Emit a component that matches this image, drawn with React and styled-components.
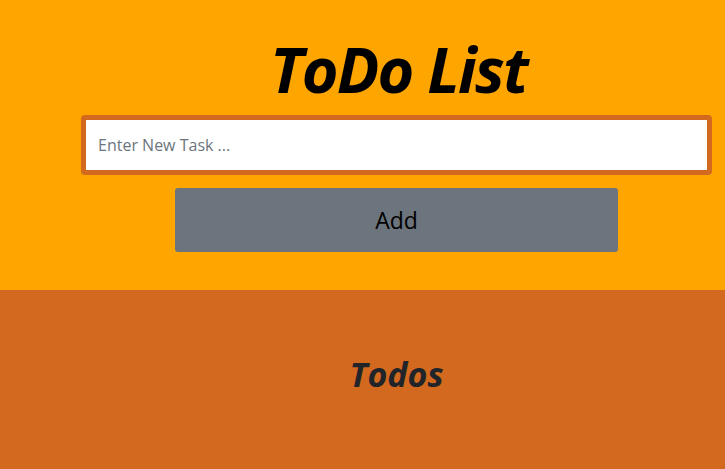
import React, { useState } from "react";
import styled, { createGlobalStyle } from "styled-components";

const GlobalStyle = createGlobalStyle`
  html, body {
    margin: 0;
    padding: 0;
    background: #d2691e;
    font-family: "Open Sans", "Noto Sans", sans-serif;
  }
  * {
    box-sizing: border-box;
  }
`;

const Header = styled.section`
  background: #ffa500;
  height: 290px;
  padding: 31px 13px 0 81px;
  display: flex;
  flex-direction: column;
  align-items: center;
`;

const Title = styled.h1`
  margin: 0;
  font-size: 63px;
  line-height: 1.2;
  font-style: italic;
  font-weight: 700;
  color: #000;
  letter-spacing: -1.8px;
  padding-left: 4px;
`;

const TaskInput = styled.input`
  margin-top: 8px;
  width: 100%;
  height: 60px;
  border: 5px solid #d2691e;
  border-radius: 4px;
  padding: 0 12px;
  font-family: inherit;
  font-size: 16px;
  color: #212529;
  outline: none;
  &::placeholder {
    color: #6c757d;
  }
`;

const AddButton = styled.button`
  margin-top: 13px;
  width: 443px;
  height: 64px;
  border: none;
  border-radius: 3px;
  background: #6c757d;
  color: #000;
  font-family: inherit;
  font-size: 23px;
  cursor: pointer;
`;

const TodosSection = styled.section`
  background: #d2691e;
  min-height: 179px;
  padding: 64px 13px 0 81px;
  display: flex;
  flex-direction: column;
  align-items: center;
`;

const SubTitle = styled.h2`
  margin: 0;
  font-size: 34px;
  line-height: 1.2;
  font-style: italic;
  font-weight: 700;
  color: #212529;
`;

const TodoItem = styled.div`
  font-size: 18px;
  color: #212529;
  padding: 6px 0;
`;

const App = () => {
  const [task, setTask] = useState("");
  const [todos, setTodos] = useState([]);

  const addTask = () => {
    if (task.trim() === "") return;
    setTodos([...todos, task.trim()]);
    setTask("");
  };

  return (
    <>
      <GlobalStyle />
      <Header>
        <Title>ToDo List</Title>
        <TaskInput
          placeholder="Enter New Task ..."
          value={task}
          onChange={(e) => setTask(e.target.value)}
        />
        <AddButton onClick={addTask}>Add</AddButton>
      </Header>
      <TodosSection>
        <SubTitle>Todos</SubTitle>
        {todos.map((todo, idx) => (
          <TodoItem key={idx}>{todo}</TodoItem>
        ))}
      </TodosSection>
    </>
  );
};

export default App;
